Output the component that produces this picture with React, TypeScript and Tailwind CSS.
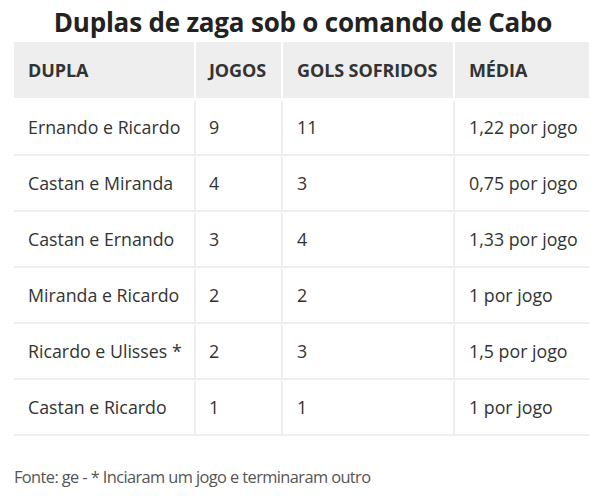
import React from "react";

const rows = [
  ["Ernando e Ricardo", "9", "11", "1,22 por jogo"],
  ["Castan e Miranda", "4", "3", "0,75 por jogo"],
  ["Castan e Ernando", "3", "4", "1,33 por jogo"],
  ["Miranda e Ricardo", "2", "2", "1 por jogo"],
  ["Ricardo e Ulisses *", "2", "3", "1,5 por jogo"],
  ["Castan e Ricardo", "1", "1", "1 por jogo"],
];

export default function App() {
  return (
    <div
      className="w-[602px] h-[496px] bg-white text-[#333333] pt-[5px]"
      style={{ fontFamily: '"Open Sans", sans-serif' }}
    >
      <h1 className="text-center text-[26px] font-bold leading-[34px] text-[#222222] tracking-[-0.2px] pl-[4px]">
        Duplas de zaga sob o comando de Cabo
      </h1>
      <div className="mx-[14px] mt-[3px] w-[575px]">
        <div className="grid grid-cols-[180px_2px_85px_2px_170px_2px_134px] bg-[#eeeeee] h-[56px] items-center text-[18px] font-bold text-[#333333] tracking-[-0.1px]">
          <div className="pl-[14px]">DUPLA</div>
          <div className="h-full bg-white" />
          <div className="pl-[13px]">JOGOS</div>
          <div className="h-full bg-white" />
          <div className="pl-[14px]">GOLS SOFRIDOS</div>
          <div className="h-full bg-white" />
          <div className="pl-[14px]">MÉDIA</div>
        </div>
        <div className="h-[2px] bg-white" />
        {rows.map((r, i) => (
          <div
            key={i}
            className="grid grid-cols-[180px_2px_85px_2px_170px_2px_134px] h-[56px] items-center border-b-2 border-[#eeeeee] text-[17.8px] pt-[1px]"
          >
            <div className="pl-[14px]">{r[0]}</div>
            <div className="h-full bg-[#eeeeee]" />
            <div className="pl-[13px]">{r[1]}</div>
            <div className="h-full bg-[#eeeeee]" />
            <div className="pl-[14px]">{r[2]}</div>
            <div className="h-full bg-[#eeeeee]" />
            <div className="pl-[14px]">{r[3]}</div>
          </div>
        ))}
        <div className="mt-[29px] text-[16.4px] text-[#555555] tracking-[-0.6px]">
          Fonte: ge - * Inciaram um jogo e terminaram outro
        </div>
      </div>
    </div>
  );
}
